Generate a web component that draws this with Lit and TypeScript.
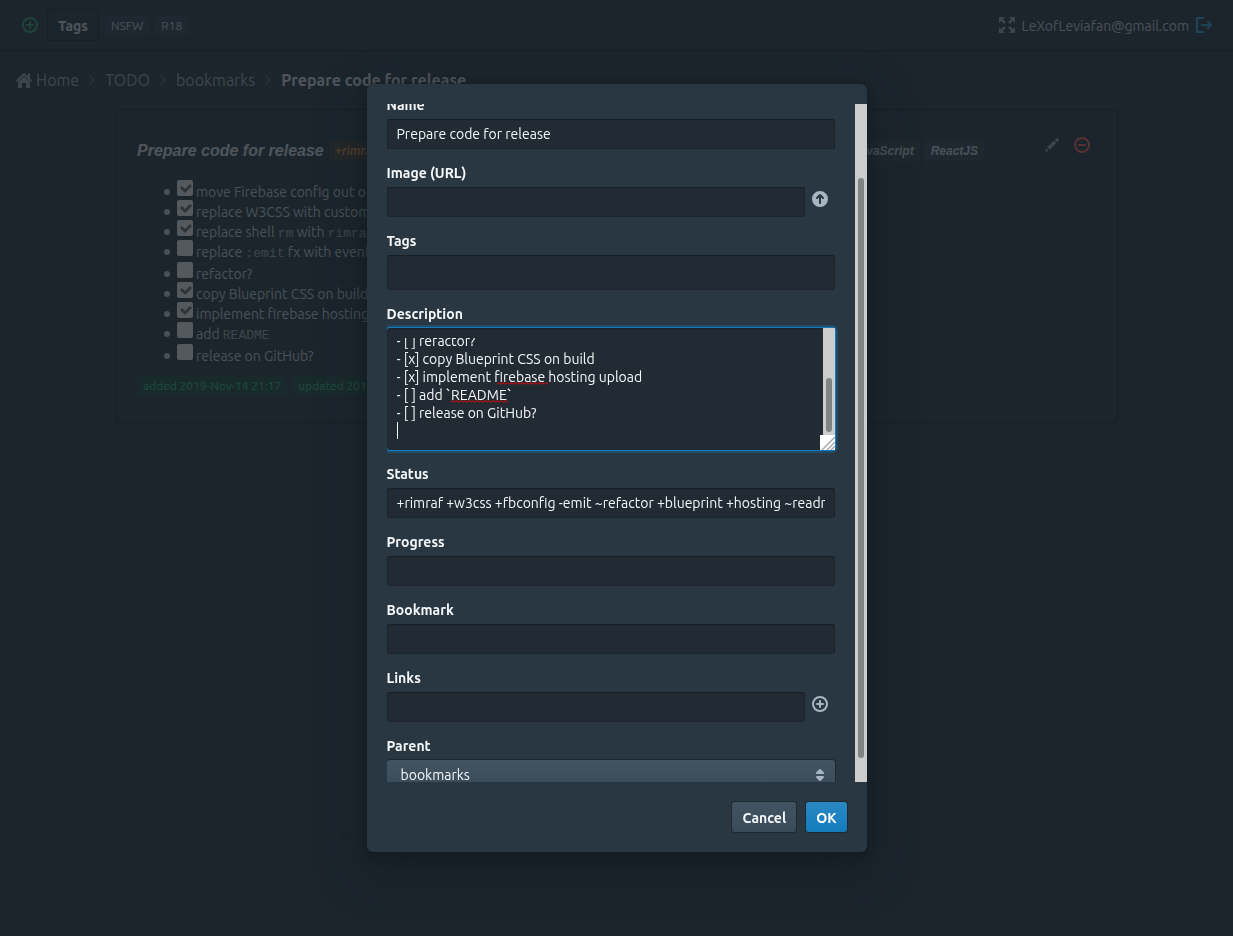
import { LitElement, html, svg, css } from "lit";
import { customElement, state } from "lit/decorators.js";

const icon = (body: unknown) =>
  html`<svg class="icon" viewBox="0 0 16 16" width="16" height="16" aria-hidden="true">${body}</svg>`;

const icons = {
  add: svg`<circle cx="8" cy="8" r="7" fill="none" stroke="currentColor" stroke-width="2"/><path d="M8 5v6M5 8h6" stroke="currentColor" stroke-width="2" stroke-linecap="round"/>`,
  remove: svg`<circle cx="8" cy="8" r="7" fill="none" stroke="currentColor" stroke-width="2"/><path d="M5 8h6" stroke="currentColor" stroke-width="2" stroke-linecap="round"/>`,
  upload: svg`<path fill="currentColor" fill-rule="evenodd" d="M8 0a8 8 0 1 0 0 16A8 8 0 0 0 8 0zm3 8c-.28 0-.53-.11-.71-.29L9 6.410V12c0 .55-.45 1-1 1s-1-.45-1-1V6.410L5.710 7.710A1 1 0 0 1 4.290 6.290l3-3a1 1 0 0 1 1.420 0l3 3A1 1 0 0 1 11 8z"/>`,
  maximize: svg`<path fill="currentColor" d="M0 0h6L3.900 2.100 6.900 5.100 5.100 6.900 2.100 3.900 0 6zM16 0v6l-2.100-2.100-3 3-1.800-1.800 3-3L10 0zM0 16v-6l2.100 2.100 3-3 1.800 1.800-3 3L6 16zM16 16h-6l2.100-2.100-3-3 1.800-1.800 3 3L16 10z"/>`,
  signOut: svg`<path fill="none" stroke="currentColor" stroke-width="2" d="M8 1H1v14h7M5 8h9"/><path fill="none" stroke="currentColor" stroke-width="2" stroke-linecap="round" stroke-linejoin="round" d="M12 5l3 3-3 3"/>`,
  home: svg`<path fill="currentColor" d="M2 10v5c0 .55.45 1 1 1h3v-5h4v5h3c.55 0 1-.45 1-1v-5L8 4.500zM15.700 8.300L14 6.600V2c0-.55-.45-1-1-1s-1 .45-1 1v2.600L8.700 1.300a1 1 0 0 0-1.400 0l-7 7a1 1 0 0 0 1.400 1.400L8 3.400l6.300 6.300a1 1 0 0 0 1.400-1.400z"/>`,
  chevron: svg`<path fill="none" stroke="currentColor" stroke-width="2" stroke-linecap="round" stroke-linejoin="round" d="M6 4l4 4-4 4"/>`,
  edit: svg`<path fill="currentColor" d="M3.250 10.260l2.470 2.470 6.690-6.690-2.460-2.480zM1 15l3.700-1.300-2.440-2.440zM14.500 1.640a1.750 1.750 0 0 0-2.430-.14L10.650 2.870l2.460 2.470 1.390-1.370a1.680 1.680 0 0 0 0-2.330z"/>`,
  caret: svg`<path fill="currentColor" d="M5 7h6a1 1 0 0 0 .71-1.710l-3-3a1 1 0 0 0-1.420 0l-3 3A1 1 0 0 0 5 7zm6 2H5a1 1 0 0 0-.71 1.710l3 3a1 1 0 0 0 1.420 0l3-3A1 1 0 0 0 11 9z"/>`,
};

const TODO = [
  { done: true, text: html`move Firebase config out of` },
  { done: true, text: html`replace W3CSS with custom` },
  { done: true, text: html`replace shell <code>rm</code> with <code>rimraf</code>` },
  { done: false, text: html`replace <code>:emit</code> fx with events` },
  { done: false, text: html`refactor?` },
  { done: true, text: html`copy Blueprint CSS on build` },
  { done: true, text: html`implement firebase hosting` },
  { done: false, text: html`add <code>README</code>` },
  { done: false, text: html`release on GitHub?` },
];

const DESCRIPTION = [
  "- [ ] replace `:emit` fx with events",
  "- [ ] refactor?",
  "- [x] copy Blueprint CSS on build",
  "- [x] implement firebase hosting upload",
  "- [ ] add `README`",
  "- [ ] release on GitHub?",
  "",
].join("\n");

const shared = css`
  * { box-sizing: border-box; }
  .icon { display: block; flex: none; }
  button, input, textarea, select {
    font: inherit;
    color: inherit;
    margin: 0;
    border: 0;
    outline: 0;
  }
  button { background: none; padding: 0; cursor: pointer; }
`;

@customElement("todo-page")
export class TodoPage extends LitElement {
  static styles = [
    shared,
    css`
      :host { display: block; color: #f5f8fa; }
      a { color: inherit; text-decoration: none; }
      header {
        display: flex;
        align-items: center;
        gap: 6px;
        height: 50px;
        padding: 0 21px 0 22px;
        background: #394b59;
        box-shadow: 0 1px 1px rgba(16, 22, 26, 0.4);
      }
      .new { color: #3dcc91; margin-right: 4px; opacity: 0.8; }
      .tags {
        height: 30px;
        padding: 1px 10px 0;
        margin-right: 1px;
        border-radius: 3px;
        font-size: 14px;
        font-weight: 700;
        color: #e1e8ed;
        box-shadow: 0 0 0 1px rgba(16, 22, 26, 0.4);
      }
      .tag {
        display: inline-block;
        padding: 2px 6px;
        border-radius: 3px;
        font-size: 12px;
        line-height: 16px;
        white-space: nowrap;
        color: #ced9e0;
        background: rgba(138, 155, 168, 0.15);
      }
      header .tag { padding: 3px 6px 1px; }
      .green { color: #3dcc91; background: rgba(15, 153, 96, 0.2); }
      .orange { color: #e39a58; background: rgba(217, 130, 43, 0.15); }
      .user { display: flex; align-items: center; gap: 7px; margin-left: auto; color: #ced9e0; }
      .user span { padding-top: 2px; }
      .user .icon { color: #a7b6c2; }
      .user .out .icon { color: #48aff0; }
      nav {
        display: flex;
        align-items: center;
        gap: 5px;
        padding: 20px 16px 0;
        font-size: 16px;
        line-height: 20px;
        color: #a7b6c2;
      }
      nav a { display: flex; align-items: center; gap: 4px; }
      nav > .icon { color: #5c7080; }
      nav strong { color: #e1e8ed; }
      .card {
        margin: 20px 116px 0 117px;
        padding: 20px 20px 26px;
        border-radius: 3px;
        box-shadow: 0 0 0 1px rgba(16, 22, 26, 0.4);
      }
      .title { display: flex; align-items: flex-start; }
      h4 {
        flex: 1;
        display: flex;
        align-items: center;
        gap: 5px;
        margin: 0;
        padding: 11px 53px 0 0;
        color: #e1e8ed;
        font: italic 700 16px/20px "Liberation Sans", Arial, sans-serif;
      }
      .mid { flex: 1; }
      .act { padding: 7px; color: #a7b6c2; }
      .act.del { color: #ff7373; }
      ul { margin: 20px 0 0; padding: 0 0 0 40px; list-style: none; font-size: 14px; line-height: 20px; }
      li label { display: flex; align-items: center; gap: 3px; height: 20px; }
      li { display: flex; align-items: center; gap: 7px; }
      li::before {
        content: "";
        width: 6px;
        height: 6px;
        margin: 2px 0 0 -13px;
        border-radius: 50%;
        background: #ced9e0;
      }
      li.open + .open { margin-top: 2px; }
      li input {
        appearance: none;
        width: 16px;
        height: 16px;
        margin-bottom: 6px;
        border-radius: 2px;
        background: #f5f8fa;
      }
      li input:checked {
        background: #f5f8fa url("data:image/svg+xml,%3Csvg xmlns='http://www.w3.org/2000/svg' viewBox='0 0 16 16'%3E%3Cpath d='M4 7l4 4 6-6' fill='none' stroke='%2374818b' stroke-width='3'/%3E%3C/svg%3E");
      }
      li span { padding-top: 1px; white-space: nowrap; color: #ced9e0; }
      code { font: 13px "Liberation Mono", monospace; color: #a7b6c2; }
      .dates { display: flex; gap: 5px; margin-top: 11px; }
    `,
  ];

  render() {
    return html`
      <header>
        <button class="new" aria-label="Add">${icon(icons.add)}</button>
        <button class="tags">Tags</button>
        <span class="tag">NSFW</span>
        <span class="tag">R18</span>
        <div class="user">
          ${icon(icons.maximize)}
          <span>LeXofLeviafan@gmail.com</span>
          <button class="out" aria-label="Sign out">${icon(icons.signOut)}</button>
        </div>
      </header>
      <nav>
        <a href="#home">${icon(icons.home)}Home</a>
        ${icon(icons.chevron)}
        <a href="#todo">TODO</a>
        ${icon(icons.chevron)}
        <a href="#bookmarks">bookmarks</a>
        ${icon(icons.chevron)}
        <strong>Prepare code for release</strong>
      </nav>
      <section class="card">
        <div class="title">
          <h4>
            Prepare code for release
            <span class="tag orange">+rimraf</span>
            <span class="mid"></span>
            <span class="tag">JavaScript</span>
            <span class="tag">ReactJS</span>
          </h4>
          <button class="act" aria-label="Edit">${icon(icons.edit)}</button>
          <button class="act del" aria-label="Delete">${icon(icons.remove)}</button>
        </div>
        <ul>
          ${TODO.map(
            (t) => html`<li class=${t.done ? "done" : "open"}>
              <label><input type="checkbox" .checked=${t.done} /><span>${t.text}</span></label>
            </li>`
          )}
        </ul>
        <div class="dates">
          <span class="tag green">added 2019-Nov-14 21:17</span>
          <span class="tag green">updated 2019</span>
        </div>
      </section>
    `;
  }
}

@customElement("edit-dialog")
export class EditDialog extends LitElement {
  @state() private description = DESCRIPTION;

  static styles = [
    shared,
    css`
      :host {
        display: flex;
        flex-direction: column;
        width: 500px;
        max-width: 100%;
        padding: 20px 0;
        border-radius: 6px;
        background: #293742;
        color: #f5f8fa;
        box-shadow: 0 0 0 1px rgba(16, 22, 26, 0.2), 0 4px 8px rgba(16, 22, 26, 0.4),
          0 18px 46px 6px rgba(16, 22, 26, 0.4);
      }
      .body { display: flex; height: calc(100vh - 258px); margin-left: 20px; overflow: hidden; }
      form { flex: 1; min-width: 0; margin-top: -8px; padding-right: 20px; }
      .group { margin-bottom: 15px; }
      .group > label { display: block; margin-bottom: 5px; font-weight: 700; line-height: 18px; }
      .row { display: flex; align-items: flex-start; }
      .field {
        display: block;
        flex: 1;
        width: 100%;
        min-width: 0;
        height: 30px;
        padding: 0 10px;
        border-radius: 3px;
        background: #222b33;
        box-shadow: inset 0 0 0 1px rgba(16, 22, 26, 0.3), inset 0 1px 1px rgba(16, 22, 26, 0.4);
      }
      .tall { height: 35px; }
      .side { display: flex; justify-content: center; align-items: center; width: 30px; height: 24px; color: #a7b6c2; }
      .area {
        position: relative;
        height: 122px;
        padding: 10px 22px 10px 10px;
        border-radius: 3px;
        background: #222b33;
        box-shadow: 0 0 0 1px #137cbd, 0 0 0 3px rgba(19, 124, 189, 0.3), inset 0 1px 1px rgba(16, 22, 26, 0.4);
      }
      textarea {
        display: block;
        width: 100%;
        height: 102px;
        padding: 0;
        border: 0;
        background: none;
        resize: none;
        line-height: 18px;
        overflow: hidden;
      }
      .caret { position: absolute; left: 10px; bottom: 11px; width: 1px; height: 17px; background: #f5f8fa; }
      .squiggle {
        position: absolute;
        height: 3px;
        background: url("data:image/svg+xml,%3Csvg xmlns='http://www.w3.org/2000/svg' width='4' height='3'%3E%3Cpath d='M0 2.500L2 .5 4 2.500' fill='none' stroke='red'/%3E%3C/svg%3E");
      }
      .one { left: 110px; top: 54px; width: 51px; }
      .two { left: 64px; top: 72px; width: 57px; }
      .bar { flex: none; width: 12px; background: #cdcdcd; padding: 74px 3px 24px; display: flex; }
      .bar i { flex: 1; border-radius: 3px; background: #808584; }
      .area .bar { position: absolute; right: 0; top: 0; height: 107px; padding: 50px 3px 3px; }
      .grip { position: absolute; right: 0; bottom: 0; background: #fff; }
      .select { position: relative; }
      select {
        appearance: none;
        display: block;
        width: 100%;
        height: 30px;
        padding: 0 14px;
        border-radius: 3px;
        background: linear-gradient(#425361, #394b59);
        box-shadow: 0 0 0 1px rgba(16, 22, 26, 0.4);
      }
      .select .icon { position: absolute; right: 7px; top: 7px; color: #a7b6c2; pointer-events: none; }
      footer { display: flex; justify-content: flex-end; gap: 10px; padding: 20px 20px 0; }
      footer button {
        height: 30px;
        padding: 1px 10px 0;
        border-radius: 3px;
        font-weight: 700;
        background: linear-gradient(#425361, #394b59);
        box-shadow: 0 0 0 1px rgba(16, 22, 26, 0.4);
      }
      footer .ok { background: linear-gradient(#2b88c4, #137cbd); color: #fff; }
    `,
  ];

  firstUpdated() {
    const area = this.renderRoot.querySelector("textarea")!;
    area.scrollTop = area.scrollHeight;
  }

  private text(id: string, label: string, value = "", side?: unknown, sideLabel = "") {
    return html`<div class="group">
      <label for=${id}>${label}</label>
      <div class="row">
        <input class="field ${id === "tags" ? "tall" : ""}" id=${id} type="text" .value=${value} />
        ${side ? html`<button type="button" class="side" aria-label=${sideLabel}>${icon(side)}</button>` : ""}
      </div>
    </div>`;
  }

  render() {
    return html`
      <div class="body">
        <form>
          ${this.text("name", "Name", "Prepare code for release")}
          ${this.text("image", "Image (URL)", "", icons.upload, "Upload")}
          ${this.text("tags", "Tags")}
          <div class="group">
            <label for="description">Description</label>
            <div class="area">
              <textarea id="description" spellcheck="false" .value=${this.description}></textarea>
              <span class="squiggle one"></span>
              <span class="squiggle two"></span>
              <span class="caret"></span>
              <span class="bar"><i></i></span>
              <svg class="grip" width="15" height="15" viewBox="0 0 15 15" aria-hidden="true">
                <path d="M2 15L15 2M7 15l8-8M11 15l4-4" stroke="#aaa" stroke-width="1.500" />
              </svg>
            </div>
          </div>
          ${this.text("status", "Status", "+rimraf +w3css +fbconfig -emit ~refactor +blueprint +hosting ~readme")}
          ${this.text("progress", "Progress")}
          ${this.text("bookmark", "Bookmark")}
          ${this.text("links", "Links", "", icons.add, "Add link")}
          <div class="group">
            <label for="parent">Parent</label>
            <div class="select">
              <select id="parent"><option>bookmarks</option></select>
              ${icon(icons.caret)}
            </div>
          </div>
        </form>
        <div class="bar"><i></i></div>
      </div>
      <footer>
        <button type="button">Cancel</button>
        <button type="button" class="ok">OK</button>
      </footer>
    `;
  }
}

@customElement("app-root")
export class AppRoot extends LitElement {
  static styles = css`
    :host {
      display: block;
      min-height: 100vh;
      background: #394b59;
      font: 14px/18px Ubuntu, "Noto Sans", "Open Sans", sans-serif;
    }
    .backdrop {
      position: fixed;
      inset: 0;
      display: flex;
      align-items: center;
      justify-content: center;
      background: rgba(16, 22, 26, 0.7);
    }
  `;

  render() {
    return html`
      <todo-page></todo-page>
      <div class="backdrop">
        <edit-dialog role="dialog" aria-modal="true" aria-label="Edit"></edit-dialog>
      </div>
    `;
  }
}
